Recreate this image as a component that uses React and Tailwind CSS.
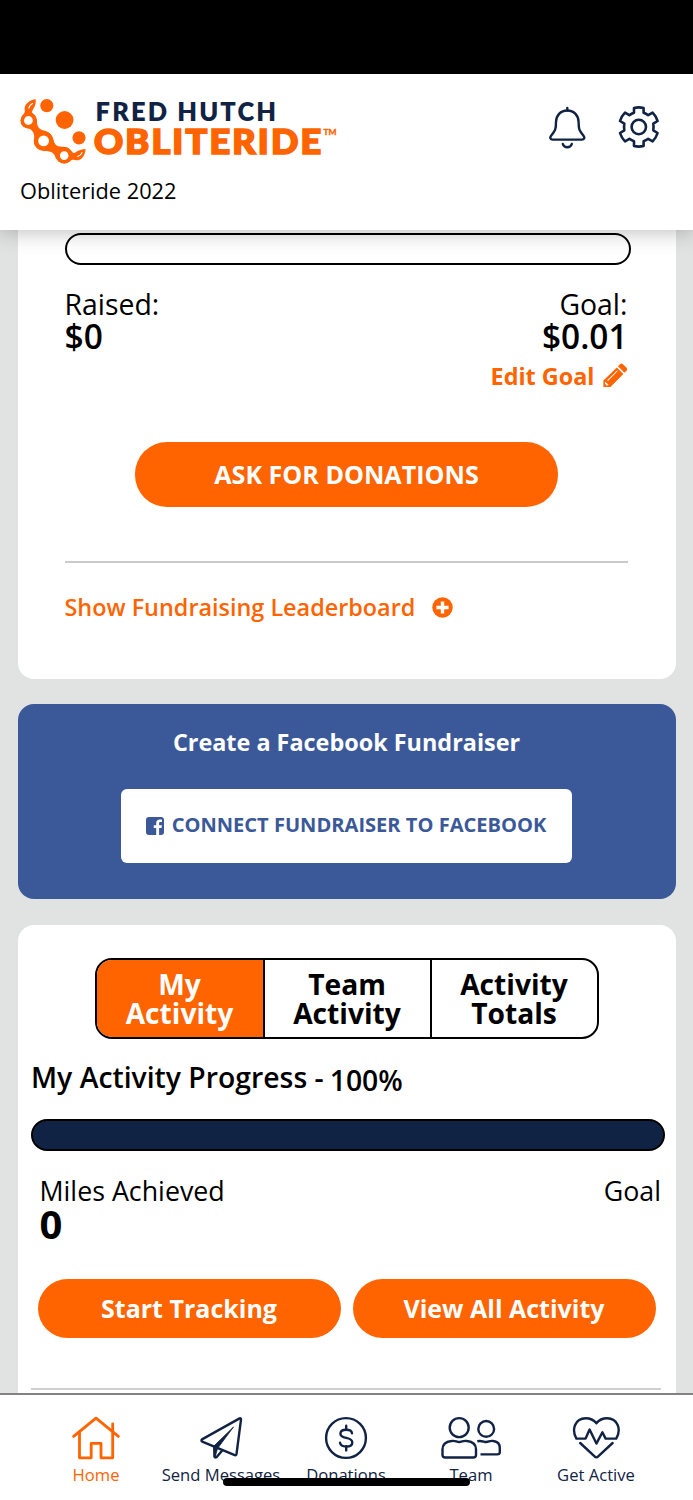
import React from 'react';

const ORANGE = '#ff6400';
const NAVY = '#112344';

function Logo() {
  return (
    <svg width="320" height="70" viewBox="20 96 320 70" className="block" role="img" aria-label="Fred Hutch Obliteride">
      <g fill={ORANGE}>
        <circle cx="46.8" cy="105.6" r="6.6" />
        <circle cx="64.6" cy="120" r="8.9" />
        <circle cx="79" cy="137.8" r="6.6" />
        <circle cx="28.7" cy="120.5" r="8.3" />
        <circle cx="43.6" cy="141" r="9.9" />
        <circle cx="64.2" cy="155.4" r="8.4" />
        <path d="M35.6 99.2C30 99.8 25.3 103.5 24.6 108C24.6 110.5 25.5 111.5 23.6 114.6L33.5 115C31.6 113 31.5 111.5 33 109.5C35 106 36.4 103 35.6 99.2Z" />
        <path d="M36.8 119C36.8 125 38 128 41 129.5C46 131.2 50.5 132.5 52.2 137L44 142L34 144C35 135 34 131 29 128.5L28 122Z" />
        <path d="M53 138C54 143.5 56 146 59.5 146.6C63.5 147 66 146.6 69.5 149L64 156L56 159C54.5 153 52 151.5 44 150.8L44 142Z" />
        <path d="M85.6 148.9C80 149.3 77 151 75 152.8C73.5 153.3 72 152.2 70.5 150L70 161.2C72 159 74 159.6 76.5 160.3C81.5 160.5 85.4 155 85.6 148.9Z" />
      </g>
      <g fill="#fff">
        <circle cx="28.4" cy="120.5" r="4.4" />
        <circle cx="43.6" cy="140.9" r="5.4" />
        <circle cx="64.2" cy="155.6" r="4.3" />
      </g>
      <g fill="none" stroke="#fff" strokeLinecap="round">
        <path d="M32.4 103.6C30.6 104.7 29.5 106 28.8 108" strokeWidth="1.2" />
        <path d="M82 152.6C81.2 154.6 79.8 155.8 77.9 156.4" strokeWidth="1.2" />
      </g>
      <g fontFamily="Lato, sans-serif" fontWeight="900">
        <text x="95.6" y="120.7" fontSize="25.4" fontWeight="800" fill={NAVY} textLength="180.5" lengthAdjust="spacing">FRED HUTCH</text>
        <text transform="translate(93.9 153.8) scale(1.06 1)" fontSize="34" fill={ORANGE} stroke={ORANGE} strokeWidth="1.7" strokeLinejoin="miter" textLength="214.5" lengthAdjust="spacing">OBLITERIDE</text>
        <text x="323.5" y="134.6" fontSize="8.2" fill={ORANGE} stroke={ORANGE} strokeWidth="0.3" textLength="13" lengthAdjust="spacingAndGlyphs">TM</text>
      </g>
    </svg>
  );
}

function BellIcon() {
  return (
    <svg width="38" height="44" viewBox="548 105 38 44" fill="none" stroke={NAVY} strokeWidth="2.4" strokeLinecap="round" strokeLinejoin="round">
      <path d="M567.3 108V110.5" />
      <path d="M567.3 110.5C560.5 110.5 556 115.5 556 122C556 129.5 555.4 130.5 551.3 135.4C549.5 137.6 550.3 139.6 552.8 139.6H581.8C584.3 139.6 585.1 137.6 583.3 135.4C579.2 130.5 578.6 129.5 578.6 122C578.6 115.5 574.1 110.5 567.3 110.5Z" />
      <path d="M562.8 144C563.5 146.3 565.2 147.3 567.3 147.3C569.4 147.3 571.1 146.3 571.8 144" />
    </svg>
  );
}

function GearIcon() {
  return (
    <svg width="44" height="44" viewBox="617 105.5 44 44" fill="none" stroke={NAVY} strokeWidth="2.6" strokeLinejoin="round">
      <path d="M634 108.4Q638.8 107.4 643.6 108.4V113.2Q646 114 648.2 115.7L652.6 113.2Q656.2 116.8 657.6 121.5L653.3 124.2Q653.8 127.5 653.3 130.8L657.6 133.5Q656.2 138.2 652.6 141.8L648.2 139.3Q646 141 643.6 141.8V146.6Q638.8 147.6 634 146.6V141.8Q631.6 141 629.4 139.3L625 141.8Q621.4 138.2 620 133.5L624.3 130.8Q623.8 127.5 624.3 124.2L620 121.5Q621.4 116.8 625 113.2L629.4 115.7Q631.6 114 634 113.2Z" />
      <circle cx="638.8" cy="127.5" r="7.2" />
    </svg>
  );
}

function PencilIcon() {
  return (
    <svg width="26" height="26" viewBox="0 0 26 26" fill={ORANGE}>
      <path d="M18 2.2Q19.3 0.7 20.7 2L24.6 5.8Q26 7.2 24.6 8.7L22.5 10.8L15.9 4.3Z" />
      <path fillRule="evenodd" d="M14.8 5.4L21.4 12L8.4 25H1.4V18.6ZM15.1 8.4L5.2 18.3L5.9 19L15.8 9.1ZM3.3 19.7L2.9 21.4V22.3H4.1V23.5H5L6.7 23.1Z" />
    </svg>
  );
}

function PlusCircleIcon() {
  return (
    <svg width="21" height="21" viewBox="0 0 21 21">
      <circle cx="10.5" cy="10.5" r="10.2" fill={ORANGE} />
      <path d="M10.5 4.4V16.6M4.4 10.5H16.6" stroke="#fff" strokeWidth="3.4" />
    </svg>
  );
}

function FacebookIcon() {
  return (
    <svg width="18" height="18" viewBox="0 0 18 18">
      <rect width="18" height="18" rx="3" fill="#3b5998" />
      <path d="M10.2 18V11H7.8V8.2H10.2V6.2C10.2 3.8 11.6 2.5 13.8 2.5L16 2.6V5.1H14.5C13.4 5.1 13.1 5.6 13.1 6.5V8.2H15.9L15.5 11H13.1V18Z" fill="#fff" />
    </svg>
  );
}

function HomeIcon() {
  return (
    <svg width="50" height="44" viewBox="71 1416 50 44" fill="none" stroke={ORANGE} strokeWidth="2.8" strokeLinecap="round" strokeLinejoin="round">
      <path d="M73.6 1436.3L96 1418.2L118.4 1436.3" />
      <path d="M79.5 1432V1457.8H91.2V1443.4H101V1457.8H112.7V1424" />
    </svg>
  );
}

function PlaneIcon() {
  return (
    <svg width="44" height="44" viewBox="199 1416 44 44" fill="none" stroke={NAVY} strokeWidth="2.4" strokeLinecap="round" strokeLinejoin="round">
      <path d="M239.6 1418.4L202 1439.4Q200.8 1440.6 202.2 1441.6L234.8 1455.2Q236.2 1455.6 236.5 1454L241 1419.6Q241 1417.8 239.6 1418.4Z" />
      <path d="M213.6 1446.3L233.5 1427L217.5 1448.5L215 1457.4Z" fill={NAVY} strokeWidth="0.8" />
      <path d="M214.4 1446.5V1456.5Q215 1458 216.5 1457.2L222 1450.7" />
    </svg>
  );
}

function DollarIcon() {
  return (
    <svg width="44" height="44" viewBox="324 1416 44 44" fill="none" stroke={NAVY} strokeWidth="2.4" strokeLinecap="round">
      <circle cx="346" cy="1438" r="19.9" />
      <path d="M346.2 1425.8V1429.8M346.2 1446.5V1450.4" />
      <path d="M352 1433.2C351.6 1430.8 349.3 1429.8 346.2 1429.8C342.8 1429.8 340.4 1431.2 340.4 1433.8C340.4 1436.6 343 1437.3 346.2 1437.9C349.6 1438.6 352.3 1439.4 352.3 1442.4C352.3 1445 349.7 1446.5 346.2 1446.5C342.9 1446.5 340.4 1445.2 340 1442.6" />
    </svg>
  );
}

function TeamIcon() {
  return (
    <svg width="62" height="44" viewBox="440 1416 62 44" fill="none" stroke={NAVY} strokeWidth="2.4" strokeLinecap="butt" strokeLinejoin="round">
      <circle cx="459.2" cy="1427.6" r="9.5" />
      <circle cx="486.2" cy="1428.9" r="7.9" />
      <path d="M451.5 1441C455.5 1440.3 456.3 1442 459.2 1442C462.1 1442 463 1440.3 467 1441C472.8 1441.6 476 1444.3 476 1449.3V1455Q476 1457.5 473.2 1457.5H445.3Q442.5 1457.5 442.5 1455V1449.3C442.5 1444.3 445.7 1441.6 451.5 1441Z" />
      <path d="M477.3 1441.2C482.5 1440.3 483.5 1442 486.2 1442C489 1442 489.5 1440.3 493.5 1441C498 1441.6 499.8 1444 499.8 1448V1452Q499.8 1454.4 497.3 1454.4H480.5" />
    </svg>
  );
}

function HeartIcon() {
  return (
    <svg width="50" height="44" viewBox="571 1416 50 44" fill="none" stroke={NAVY} strokeWidth="2.4" strokeLinecap="round" strokeLinejoin="round">
      <path d="M576.4 1438.6H585.6L589.6 1429.6L596.4 1443.6L602.4 1432.2L605.6 1438.6H616.2C621.6 1429.5 617.8 1418.2 607 1418.2C602.2 1418.2 599.2 1419.8 596.4 1423.2C593.6 1419.8 590.4 1418.2 585.8 1418.2C575 1418.2 571.2 1429.5 576.4 1438.6Z" />
      <path d="M580.2 1443L594.6 1456.4Q596.4 1458.4 598.2 1456.4L612.6 1443" />
    </svg>
  );
}

const navItems = [
  { label: 'Home', Icon: HomeIcon, active: true },
  { label: 'Send Messages', Icon: PlaneIcon },
  { label: 'Donations', Icon: DollarIcon },
  { label: 'Team', Icon: TeamIcon },
  { label: 'Get Active', Icon: HeartIcon },
];

export default function App() {
  return (
    <div className="flex h-[1500px] w-[693px] flex-col overflow-hidden bg-[#e1e3e2] font-['Open_Sans',sans-serif] text-black">
      <div className="h-[74px] shrink-0 bg-black" />
      <header className="relative z-10 h-[156px] shrink-0 bg-white pt-[22px] shadow-[0_0_22px_rgba(0,0,0,0.3)]">
        <div className="flex items-start pl-5">
          <Logo />
          <div className="mt-[9px] ml-[208px] flex gap-[31px]">
            <BellIcon />
            <GearIcon />
          </div>
        </div>
        <div className="mt-[9px] pl-5 text-[21.75px] leading-[32px]">Obliteride 2022</div>
      </header>

      <main className="h-[1163px] shrink-0 overflow-hidden px-[17.5px]">
        <section className="h-[449px] rounded-b-[16px] bg-white px-[47px] pt-[3px]">
          <div className="h-[32px] w-[566.5px] rounded-[16px] border-2 border-black" />
          <div className="mt-[23px] flex w-[563px] justify-between">
            <div>
              <div className="text-[28.4px] leading-[32px]">Raised:</div>
              <div className="text-[33.5px] font-semibold leading-[32px]">$0</div>
            </div>
            <div className="text-right">
              <div className="text-[28.4px] leading-[32px]">Goal:</div>
              <div className="text-[33.4px] font-semibold leading-[32px]">$0.01</div>
            </div>
          </div>
          <div className="mt-[7px] flex h-[32px] w-[563px] items-center justify-end gap-[7px] text-[#ff6400]">
            <span className="pt-[2px] text-[23.4px] font-bold leading-[32px]">Edit Goal</span>
            <PencilIcon />
          </div>
          <button className="mx-auto mt-[51px] flex h-[65px] w-[423px] items-center justify-center rounded-[32px] bg-[#ff6400] text-[25.1px] font-bold text-white">
            ASK FOR DONATIONS
          </button>
          <div className="mt-[54px] h-[2px] w-[563px] bg-[#cbcbcb]" />
          <div className="mt-[27px] flex h-[34px] items-center gap-[17px] text-[#ff6400]">
            <span className="pt-[2px] text-[23.4px] font-semibold">Show Fundraising Leaderboard</span>
            <PlusCircleIcon />
          </div>
        </section>

        <section className="mt-[25px] h-[195px] rounded-[16px] bg-[#3b5998] pt-[22px]">
          <h2 className="text-center text-[23.4px] font-bold leading-[32px] text-white">Create a Facebook Fundraiser</h2>
          <button className="mx-auto mt-[31px] flex h-[74px] w-[451px] items-center justify-center gap-[8px] rounded-[6px] bg-white pr-[1px] pb-[1px] text-[20.08px] font-bold text-[#3b5998]">
            <FacebookIcon />
            <span>CONNECT FUNDRAISER TO FACEBOOK</span>
          </button>
        </section>

        <section className="mt-[26px] h-[600px] rounded-[16px] bg-white px-[13.5px] pt-[33px]">
          <div className="mx-auto grid h-[81px] w-[504px] grid-cols-[168px_167px_1fr] overflow-hidden rounded-[17px] border-2 border-black text-center text-[28.2px] font-bold leading-[28.7px]">
            <div className="flex items-center justify-center border-r-2 border-black bg-[#ff6400] text-white">My<br />Activity</div>
            <div className="flex items-center justify-center border-r-2 border-black">Team<br />Activity</div>
            <div className="flex items-center justify-center">Activity<br />Totals</div>
          </div>
          <div className="mt-[21px] flex h-[36px] text-[28.35px] font-semibold leading-[34px]">
            <span>My Activity Progress -</span>
            <span className="ml-[6px] pt-[3px]">100%</span>
          </div>
          <div className="mt-[23px] h-[32px] w-[634px] rounded-[16px] border-2 border-black bg-[#112344]" />
          <div className="mt-[24px] flex w-[630px] justify-between pl-[8.5px] text-[26.8px] leading-[32px]">
            <span>Miles Achieved</span>
            <span>Goal</span>
          </div>
          <div className="pl-[8.5px] text-[40px] font-bold leading-[34px]">0</div>
          <div className="mt-[38px] flex gap-[12px] pl-[6.5px]">
            <button className="h-[59px] w-[303px] rounded-full bg-[#ff6400] text-[25px] font-bold text-white">Start Tracking</button>
            <button className="h-[59px] w-[303px] rounded-full bg-[#ff6400] text-[25px] font-bold text-white">View All Activity</button>
          </div>
          <div className="mt-[50px] h-[2px] w-[630px] bg-[#d0d0d0]" />
        </section>
      </main>

      <nav className="relative h-[107px] shrink-0 border-t-2 border-[#828282] bg-white pt-[21px] pl-[33.5px]">
        <div className="grid w-[625px] grid-cols-5">
          {navItems.map(({ label, Icon, active }) => (
            <div key={label} className={active ? 'flex flex-col items-center text-[#ff6400]' : 'flex flex-col items-center text-[#112344]'}>
              <Icon />
              <span className="mt-[3px] whitespace-nowrap text-[16.6px] leading-[24px]">{label}</span>
            </div>
          ))}
        </div>
        <div className="absolute top-[83px] left-[223px] h-[8px] w-[247px] rounded-full bg-black" />
      </nav>
    </div>
  );
}
